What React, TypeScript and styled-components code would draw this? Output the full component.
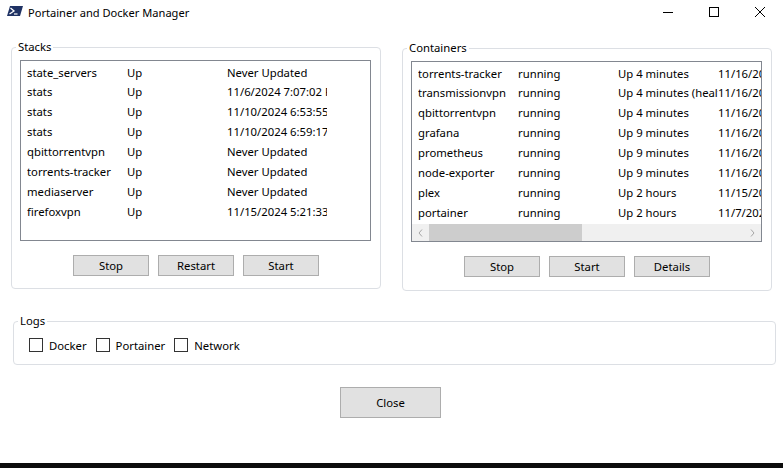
import React from "react";
import styled, { createGlobalStyle } from "styled-components";

const GlobalStyle = createGlobalStyle`
  html, body { margin: 0; padding: 0; background: #ffffff; }
  body { font-family: "Segoe UI", "Noto Sans", "Open Sans", sans-serif; font-size: 11.3px; color: #000; }
  * { box-sizing: border-box; }
`;

const Window = styled.div`
  width: 783px;
  height: 468px;
  display: flex;
  flex-direction: column;
  background: #ffffff;
  overflow: hidden;
`;

const TitleBar = styled.div`
  height: 26px;
  display: flex;
  align-items: center;
`;

const AppIcon = styled.svg`
  margin-left: 7px;
  flex: none;
`;

const Title = styled.span`
  margin-left: 5px;
  font-size: 11.1px;
  line-height: 16px;
  color: #000;
`;

const Controls = styled.div`
  margin-left: auto;
  display: flex;
  align-self: flex-start;
`;

const ControlButton = styled.div`
  width: 46px;
  height: 24px;
  display: flex;
  align-items: center;
  justify-content: center;
`;

const TopRow = styled.div`
  display: flex;
  align-items: flex-start;
  gap: 21px;
  margin-top: 21px;
  padding-left: 11px;
`;

const Group = styled.div<{ $w: number; $h: number; $offset?: number }>`
  position: relative;
  width: ${(p) => p.$w}px;
  height: ${(p) => p.$h}px;
  margin-top: ${(p) => p.$offset ?? 0}px;
  border: 1px solid #dcdfe4;
  border-radius: 4px;
  padding: 12px 8px 0 8px;
  display: flex;
  flex-direction: column;
`;

const Legend = styled.span`
  position: absolute;
  top: -9px;
  left: 4px;
  padding: 0 2px;
  background: #fff;
  font-size: 11.3px;
  line-height: 16px;
`;

const ListBox = styled.div`
  width: 351px;
  height: 181px;
  border: 1px solid #828790;
  background: #fff;
  display: flex;
  flex-direction: column;
  overflow: hidden;
`;

const Rows = styled.div`
  flex: 1;
  padding-top: 1.5px;
  overflow: hidden;
`;

const Row = styled.div`
  display: flex;
  height: 19.9px;
  line-height: 20px;
  padding-left: 6px;
  white-space: nowrap;
`;

const Cell = styled.div`
  flex: 0 0 100px;
  width: 100px;
  overflow: hidden;
  white-space: nowrap;
  color: #000;
`;

const HScroll = styled.div`
  flex: 0 0 17px;
  height: 17px;
  background: #f0f0f0;
  display: flex;
  align-items: stretch;
`;

const ScrollArrow = styled.div`
  width: 17px;
  display: flex;
  align-items: center;
  justify-content: center;
`;

const ScrollTrack = styled.div`
  flex: 1;
  display: flex;
  align-items: stretch;
`;

const ScrollThumb = styled.div`
  width: 153px;
  background: #cdcdcd;
`;

const ButtonRow = styled.div`
  display: flex;
  justify-content: center;
  gap: 9px;
  margin-top: 14px;
`;

const Button = styled.button<{ $w?: number; $h?: number }>`
  width: ${(p) => p.$w ?? 76}px;
  height: ${(p) => p.$h ?? 21}px;
  background: #e1e1e1;
  border: 1px solid #adadad;
  border-radius: 0;
  padding: 0;
  font-family: inherit;
  font-size: 11.3px;
  color: #000;
`;

const LogsGroup = styled.div`
  position: relative;
  width: 763px;
  height: 44px;
  margin: 30px 0 0 13px;
  border: 1px solid #dcdfe4;
  border-radius: 4px;
  padding: 13px 0 0 15px;
  display: flex;
  align-items: flex-start;
  align-self: flex-start;
`;

const CheckRow = styled.div`
  display: flex;
  align-items: center;
  height: 20px;
`;

const CheckItem = styled.label`
  display: flex;
  align-items: center;
  gap: 6px;
  margin-right: 9px;
  font-size: 11.3px;
`;

const Box = styled.span`
  width: 14px;
  height: 14px;
  border: 1px solid #333;
  background: #fff;
  display: inline-block;
`;

const CloseRow = styled.div`
  display: flex;
  justify-content: center;
  margin-top: 22px;
  padding-right: 2px;
`;

const Taskbar = styled.div`
  margin-top: auto;
  height: 5px;
  background: #0c0c0c;
`;

const stacks = [
  ["state_servers", "Up", "Never Updated"],
  ["stats", "Up", "11/6/2024 7:07:02 PM"],
  ["stats", "Up", "11/10/2024 6:53:55 PM"],
  ["stats", "Up", "11/10/2024 6:59:17 PM"],
  ["qbittorrentvpn", "Up", "Never Updated"],
  ["torrents-tracker", "Up", "Never Updated"],
  ["mediaserver", "Up", "Never Updated"],
  ["firefoxvpn", "Up", "11/15/2024 5:21:33 PM"],
];

const containers = [
  ["torrents-tracker", "running", "Up 4 minutes", "11/16/2024"],
  ["transmissionvpn", "running", "Up 4 minutes (healthy)", "11/16/2024"],
  ["qbittorrentvpn", "running", "Up 4 minutes", "11/16/2024"],
  ["grafana", "running", "Up 9 minutes", "11/16/2024"],
  ["prometheus", "running", "Up 9 minutes", "11/16/2024"],
  ["node-exporter", "running", "Up 9 minutes", "11/16/2024"],
  ["plex", "running", "Up 2 hours", "11/15/2024"],
  ["portainer", "running", "Up 2 hours", "11/7/2024"],
];

const Chevron = ({ dir }: { dir: "left" | "right" }) => (
  <svg width="5" height="8" viewBox="0 0 5 8">
    <path
      d={dir === "left" ? "M4 0.5 L1 4 L4 7.5" : "M1 0.5 L4 4 L1 7.5"}
      fill="none"
      stroke="#a6a6a6"
      strokeWidth="1"
    />
  </svg>
);

export default function App() {
  return (
    <Window>
      <GlobalStyle />
      <TitleBar>
        <AppIcon width="16" height="16" viewBox="0 0 16 16">
          <path d="M3 1 H16 L13 11 H0 Z" fill="#1f3264" />
          <path d="M3.5 3 L7 6 L2.5 9" fill="none" stroke="#ffffff" strokeWidth="1.3" />
          <path d="M7 9 H10.5" stroke="#ffffff" strokeWidth="1.2" />
        </AppIcon>
        <Title>Portainer and Docker Manager</Title>
        <Controls>
          <ControlButton>
            <svg width="10" height="10" viewBox="0 0 10 10">
              <path d="M0 5.5 H10" stroke="#000" strokeWidth="1" />
            </svg>
          </ControlButton>
          <ControlButton>
            <svg width="10" height="10" viewBox="0 0 10 10">
              <rect x="0.5" y="0.5" width="9" height="9" fill="none" stroke="#000" strokeWidth="1" />
            </svg>
          </ControlButton>
          <ControlButton>
            <svg width="10" height="10" viewBox="0 0 10 10">
              <path d="M0 0 L10 10 M10 0 L0 10" stroke="#000" strokeWidth="1" />
            </svg>
          </ControlButton>
        </Controls>
      </TitleBar>

      <TopRow>
        <Group $w={370} $h={242}>
          <Legend>Stacks</Legend>
          <ListBox>
            <Rows>
              {stacks.map((r, i) => (
                <Row key={i}>
                  {r.map((c, j) => (
                    <Cell key={j}>{c}</Cell>
                  ))}
                </Row>
              ))}
            </Rows>
          </ListBox>
          <ButtonRow>
            <Button>Stop</Button>
            <Button>Restart</Button>
            <Button>Start</Button>
          </ButtonRow>
        </Group>

        <Group $w={370} $h={243} $offset={1}>
          <Legend>Containers</Legend>
          <ListBox>
            <Rows>
              {containers.map((r, i) => (
                <Row key={i}>
                  {r.map((c, j) => (
                    <Cell key={j}>{c}</Cell>
                  ))}
                </Row>
              ))}
            </Rows>
            <HScroll>
              <ScrollArrow>
                <Chevron dir="left" />
              </ScrollArrow>
              <ScrollTrack>
                <ScrollThumb />
              </ScrollTrack>
              <ScrollArrow>
                <Chevron dir="right" />
              </ScrollArrow>
            </HScroll>
          </ListBox>
          <ButtonRow>
            <Button>Stop</Button>
            <Button>Start</Button>
            <Button>Details</Button>
          </ButtonRow>
        </Group>
      </TopRow>

      <LogsGroup>
        <Legend>Logs</Legend>
        <CheckRow>
          <CheckItem>
            <Box />
            Docker
          </CheckItem>
          <CheckItem>
            <Box />
            Portainer
          </CheckItem>
          <CheckItem>
            <Box />
            Network
          </CheckItem>
        </CheckRow>
      </LogsGroup>

      <CloseRow>
        <Button $w={101} $h={31}>Close</Button>
      </CloseRow>

      <Taskbar />
    </Window>
  );
}
